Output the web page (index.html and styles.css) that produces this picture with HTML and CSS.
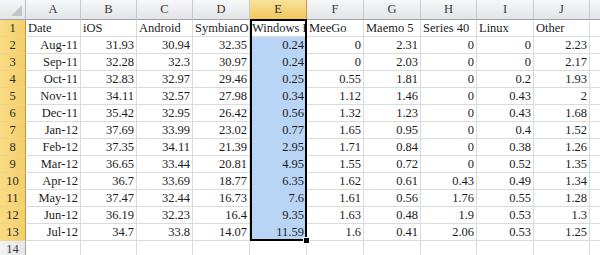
FILE: index.html
```html
<!DOCTYPE html>
<html>
<head>
<meta charset="utf-8">
<link rel="stylesheet" href="styles.css">
</head>
<body>
<div class="sheet">
  <div class="corner"><span class="tri"></span></div>
  <div class="h">A</div><div class="h">B</div><div class="h">C</div><div class="h">D</div><div class="h on">E</div><div class="h">F</div><div class="h">G</div><div class="h">H</div><div class="h">I</div><div class="h">J</div><div class="h">K</div>

  <div class="r on">1</div><div class="c">Date</div><div class="c">iOS</div><div class="c">Android</div><div class="c">SymbianOS</div><div class="c act">Windows Phone</div><div class="c">MeeGo</div><div class="c">Maemo 5</div><div class="c">Series 40</div><div class="c">Linux</div><div class="c">Other</div><div class="c"></div>

  <div class="r on">2</div><div class="c n">Aug-11</div><div class="c n">31.93</div><div class="c n">30.94</div><div class="c n">32.35</div><div class="c n s">0.24</div><div class="c n">0</div><div class="c n">2.31</div><div class="c n">0</div><div class="c n">0</div><div class="c n">2.23</div><div class="c"></div>

  <div class="r on">3</div><div class="c n">Sep-11</div><div class="c n">32.28</div><div class="c n">32.3</div><div class="c n">30.97</div><div class="c n s">0.24</div><div class="c n">0</div><div class="c n">2.03</div><div class="c n">0</div><div class="c n">0</div><div class="c n">2.17</div><div class="c"></div>

  <div class="r on">4</div><div class="c n">Oct-11</div><div class="c n">32.83</div><div class="c n">32.97</div><div class="c n">29.46</div><div class="c n s">0.25</div><div class="c n">0.55</div><div class="c n">1.81</div><div class="c n">0</div><div class="c n">0.2</div><div class="c n">1.93</div><div class="c"></div>

  <div class="r on">5</div><div class="c n">Nov-11</div><div class="c n">34.11</div><div class="c n">32.57</div><div class="c n">27.98</div><div class="c n s">0.34</div><div class="c n">1.12</div><div class="c n">1.46</div><div class="c n">0</div><div class="c n">0.43</div><div class="c n">2</div><div class="c"></div>

  <div class="r on">6</div><div class="c n">Dec-11</div><div class="c n">35.42</div><div class="c n">32.95</div><div class="c n">26.42</div><div class="c n s">0.56</div><div class="c n">1.32</div><div class="c n">1.23</div><div class="c n">0</div><div class="c n">0.43</div><div class="c n">1.68</div><div class="c"></div>

  <div class="r on">7</div><div class="c n">Jan-12</div><div class="c n">37.69</div><div class="c n">33.99</div><div class="c n">23.02</div><div class="c n s">0.77</div><div class="c n">1.65</div><div class="c n">0.95</div><div class="c n">0</div><div class="c n">0.4</div><div class="c n">1.52</div><div class="c"></div>

  <div class="r on">8</div><div class="c n">Feb-12</div><div class="c n">37.35</div><div class="c n">34.11</div><div class="c n">21.39</div><div class="c n s">2.95</div><div class="c n">1.71</div><div class="c n">0.84</div><div class="c n">0</div><div class="c n">0.38</div><div class="c n">1.26</div><div class="c"></div>

  <div class="r on">9</div><div class="c n">Mar-12</div><div class="c n">36.65</div><div class="c n">33.44</div><div class="c n">20.81</div><div class="c n s">4.95</div><div class="c n">1.55</div><div class="c n">0.72</div><div class="c n">0</div><div class="c n">0.52</div><div class="c n">1.35</div><div class="c"></div>

  <div class="r on">10</div><div class="c n">Apr-12</div><div class="c n">36.7</div><div class="c n">33.69</div><div class="c n">18.77</div><div class="c n s">6.35</div><div class="c n">1.62</div><div class="c n">0.61</div><div class="c n">0.43</div><div class="c n">0.49</div><div class="c n">1.34</div><div class="c"></div>

  <div class="r on">11</div><div class="c n">May-12</div><div class="c n">37.47</div><div class="c n">32.44</div><div class="c n">16.73</div><div class="c n s">7.6</div><div class="c n">1.61</div><div class="c n">0.56</div><div class="c n">1.76</div><div class="c n">0.55</div><div class="c n">1.28</div><div class="c"></div>

  <div class="r on">12</div><div class="c n">Jun-12</div><div class="c n">36.19</div><div class="c n">32.23</div><div class="c n">16.4</div><div class="c n s">9.35</div><div class="c n">1.63</div><div class="c n">0.48</div><div class="c n">1.9</div><div class="c n">0.53</div><div class="c n">1.3</div><div class="c"></div>

  <div class="r on">13</div><div class="c n">Jul-12</div><div class="c n">34.7</div><div class="c n">33.8</div><div class="c n">14.07</div><div class="c n s">11.59</div><div class="c n">1.6</div><div class="c n">0.41</div><div class="c n">2.06</div><div class="c n">0.53</div><div class="c n">1.25</div><div class="c"></div>

  <div class="r">14</div><div class="c"></div><div class="c"></div><div class="c"></div><div class="c"></div><div class="c"></div><div class="c"></div><div class="c"></div><div class="c"></div><div class="c"></div><div class="c"></div><div class="c"></div>

  <div class="sel"><span class="handle"></span></div>
</div>
</body>
</html>
```

FILE: styles.css
```css
html, body {
  margin: 0;
  padding: 0;
  background: #ffffff;
  overflow: hidden;
}

body {
  font-family: "Liberation Serif", "Times New Roman", serif;
  font-size: 12.5px;
  color: #1c1c1c;
}

.sheet {
  position: relative;
  display: grid;
  grid-template-columns: 26px 55px 56px 56px 57px 57px 57px 57px 56px 57px 56px 60px;
  grid-template-rows: 20px repeat(14, 17px);
  width: 650px;
}

.corner {
  position: relative;
  background: linear-gradient(#f4f5f6, #e4e5e7);
  border-right: 1px solid #b9bcc1;
  border-bottom: 1px solid #9fa4ab;
}

.tri {
  position: absolute;
  right: 3px;
  bottom: 3px;
  width: 0;
  height: 0;
  border-left: 11px solid transparent;
  border-bottom: 11px solid #c3c5c8;
}

.h {
  background: linear-gradient(#f6f7f8, #e3e4e7);
  border-right: 1px solid #c6c8cc;
  border-bottom: 1px solid #9fa4ab;
  text-align: center;
  line-height: 19px;
  color: #3a3a3a;
}

.h.on {
  background: linear-gradient(#f9e29a, #f1c75e);
  border-right-color: #c79a3f;
  border-bottom-color: #c2913a;
  color: #2a2a2a;
}

.r {
  background: linear-gradient(90deg, #f2f3f4, #e5e6e8);
  border-right: 1px solid #9fa4ab;
  border-bottom: 1px solid #c6c8cc;
  text-align: center;
  line-height: 16px;
  color: #3a3a3a;
}

.r.on {
  background: linear-gradient(90deg, #f9dc84, #f4cf6a);
  border-right-color: #c2913a;
  border-bottom-color: #f0d48c;
  color: #2a2a2a;
}

.c {
  border-right: 1px solid #dadbdc;
  border-bottom: 1px solid #dadbdc;
  padding: 0 2px;
  line-height: 17px;
  white-space: nowrap;
  overflow: hidden;
}

.n {
  text-align: right;
}

.s {
  background: #b9d5f6;
  border-bottom-color: #b9d5f6;
}

.act {
  background: #ffffff;
}

.sel {
  position: absolute;
  grid-column: 6 / 7;
  grid-row: 2 / 15;
  top: -1px;
  left: 0;
  right: 0;
  bottom: 0;
  border: 2px solid #000000;
  pointer-events: none;
}

.handle {
  position: absolute;
  right: -5px;
  bottom: -5px;
  width: 5px;
  height: 5px;
  background: #000000;
  border: 1px solid #ffffff;
}
```
